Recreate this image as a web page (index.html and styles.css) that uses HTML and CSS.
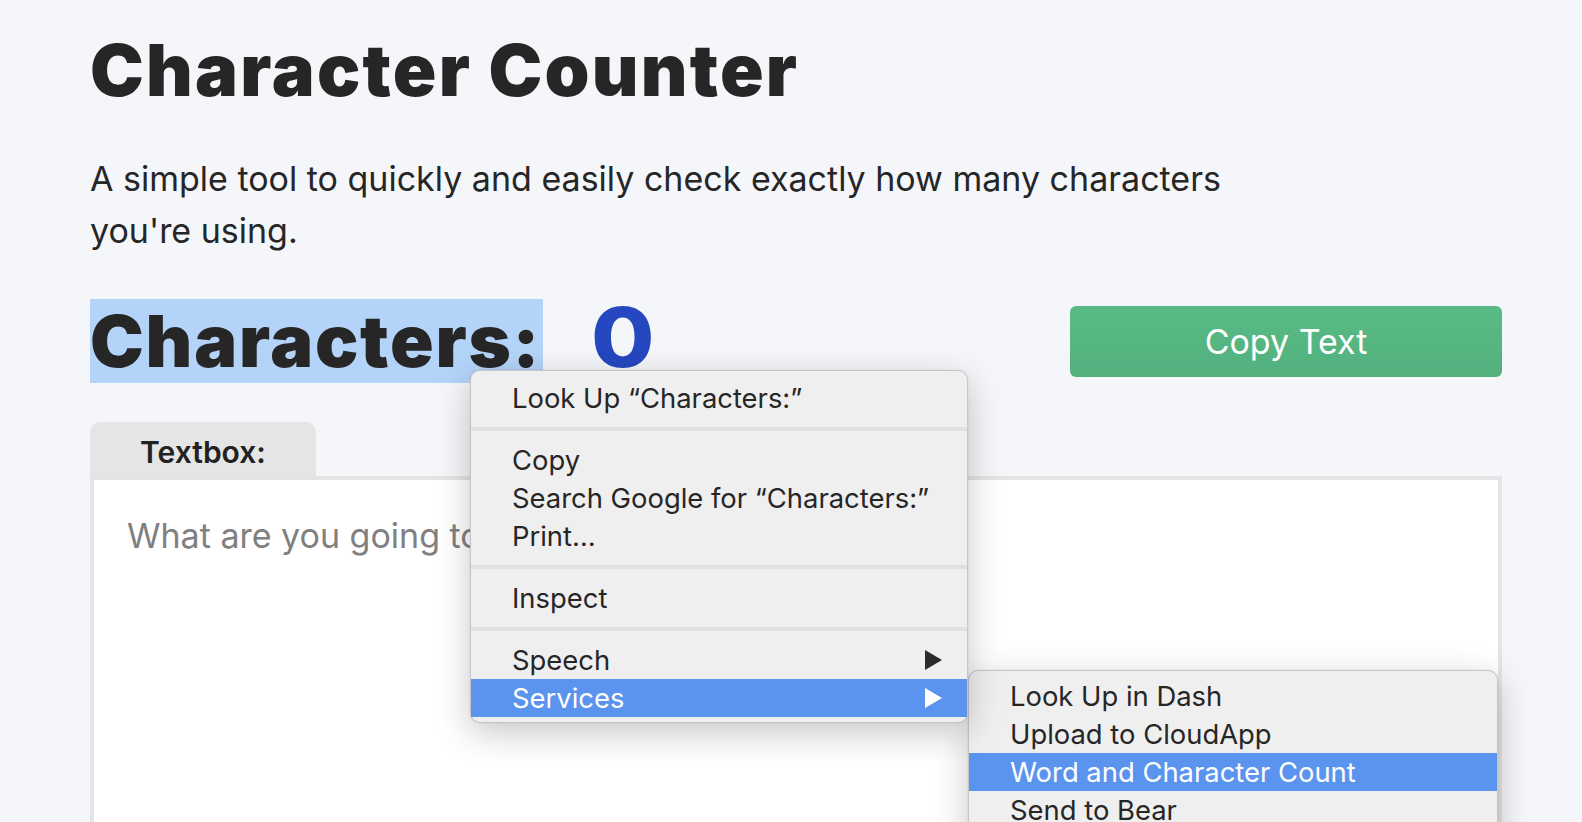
FILE: index.html
```html
<!DOCTYPE html>
<html lang="en">
<head>
<meta charset="utf-8">
<title>Character Counter</title>
<link rel="stylesheet" href="styles.css">
</head>
<body>
<main class="page">
  <h1 class="title">Character Counter</h1>
  <p class="intro">A simple tool to quickly and easily check exactly how many characters you're using.</p>
  <div class="count-row">
    <div class="count">
      <h2 class="count-label"><span class="selected">Characters:</span></h2>
      <span class="count-value">0</span>
    </div>
    <button class="copy-btn">Copy Text</button>
  </div>
  <div class="editor">
    <div class="tab">Textbox:</div>
    <div class="textarea"><span class="placeholder">What are you going to write today?</span></div>
  </div>
</main>

<div class="menu main-menu">
  <div class="item">Look Up “Characters:”</div>
  <div class="sep"></div>
  <div class="item">Copy</div>
  <div class="item">Search Google for “Characters:”</div>
  <div class="item">Print…</div>
  <div class="sep"></div>
  <div class="item">Inspect</div>
  <div class="sep"></div>
  <div class="item has-sub">Speech<span class="arrow"></span></div>
  <div class="item has-sub active">Services<span class="arrow"></span></div>
</div>

<div class="menu sub-menu">
  <div class="item">Look Up in Dash</div>
  <div class="item">Upload to CloudApp</div>
  <div class="item active">Word and Character Count</div>
  <div class="item">Send to Bear</div>
</div>
</body>
</html>
```

FILE: styles.css
```css
html, body {
  margin: 0;
  padding: 0;
}
body {
  background: #f5f6fa;
  font-family: "Inter", "Noto Sans", sans-serif;
  color: #262626;
  width: 1582px;
  height: 822px;
  overflow: hidden;
  position: relative;
}
.page {
  padding: 26px 0 0 90px;
  width: 1412px;
}
.title {
  margin: 0;
  font-size: 72px;
  line-height: 87px;
  font-weight: 900;
  letter-spacing: 2.2px;
  color: #262626;
}
.intro {
  margin: 40px 0 0 0;
  font-size: 34px;
  line-height: 52px;
  max-width: 1180px;
  color: #262626;
}
.count-row {
  margin-top: 42px;
  display: flex;
  align-items: center;
  justify-content: space-between;
  height: 84px;
}
.count {
  display: flex;
  align-items: baseline;
  height: 84px;
}
.count-label {
  margin: 0;
  font-size: 72px;
  line-height: 84px;
  font-weight: 900;
  letter-spacing: 1.8px;
  color: #262626;
}
.selected {
  background: #b4d3f8;
  display: inline-block;
  padding-right: 2px;
}
.count-value {
  margin-left: 48px;
  font-size: 82px;
  line-height: 70px;
  font-weight: 800;
  color: #2547bf;
  display: inline-block;
  transform: scaleX(1.12);
  transform-origin: left bottom;
}
.copy-btn {
  width: 432px;
  height: 71px;
  border: none;
  border-radius: 6px;
  background: linear-gradient(#58bb86, #53b17e);
  color: #ffffff;
  font-family: "Inter", "Noto Sans", sans-serif;
  font-size: 34px;
  font-weight: 400;
  padding: 0 0 0 0;
}
.editor {
  margin-top: 39px;
}
.tab {
  width: 226px;
  height: 54px;
  background: #e5e5e5;
  border-radius: 10px 10px 0 0;
  font-size: 30px;
  font-weight: 600;
  line-height: 60px;
  text-align: center;
  box-sizing: border-box;
  padding-left: 0;
  color: #222;
}
.textarea {
  border: 4px solid #e4e4e4;
  background: #ffffff;
  height: 420px;
  padding: 30px 33px;
  font-size: 34px;
  line-height: 51px;
}
.placeholder {
  color: #808080;
}

.menu {
  position: absolute;
  background: #efefef;
  border: 1px solid #c6c6c6;
  border-radius: 10px;
  box-shadow: 0 10px 34px rgba(0, 0, 0, 0.22), 0 0 2px rgba(0, 0, 0, 0.1);
  font-family: "Inter", "Noto Sans", sans-serif;
  font-size: 27.4px;
  color: #262626;
  box-sizing: border-box;
}
.main-menu {
  left: 470px;
  top: 370px;
  width: 498px;
  padding: 8px 0 5px 0;
  z-index: 3;
}
.sub-menu {
  left: 968px;
  top: 670px;
  width: 530px;
  padding: 6px 0 20px 0;
  z-index: 2;
}
.item {
  height: 38px;
  line-height: 38px;
  padding-left: 41px;
  position: relative;
  white-space: nowrap;
}
.item.active {
  background: #5b94ee;
  color: #ffffff;
}
.sep {
  height: 4px;
  margin: 10px 0;
  background: #e0e0e0;
}
.arrow {
  position: absolute;
  right: 25px;
  top: 9px;
  width: 0;
  height: 0;
  border-top: 10px solid transparent;
  border-bottom: 10px solid transparent;
  border-left: 17px solid #2b2b2b;
}
.item.active .arrow {
  border-left-color: #ffffff;
}
```
